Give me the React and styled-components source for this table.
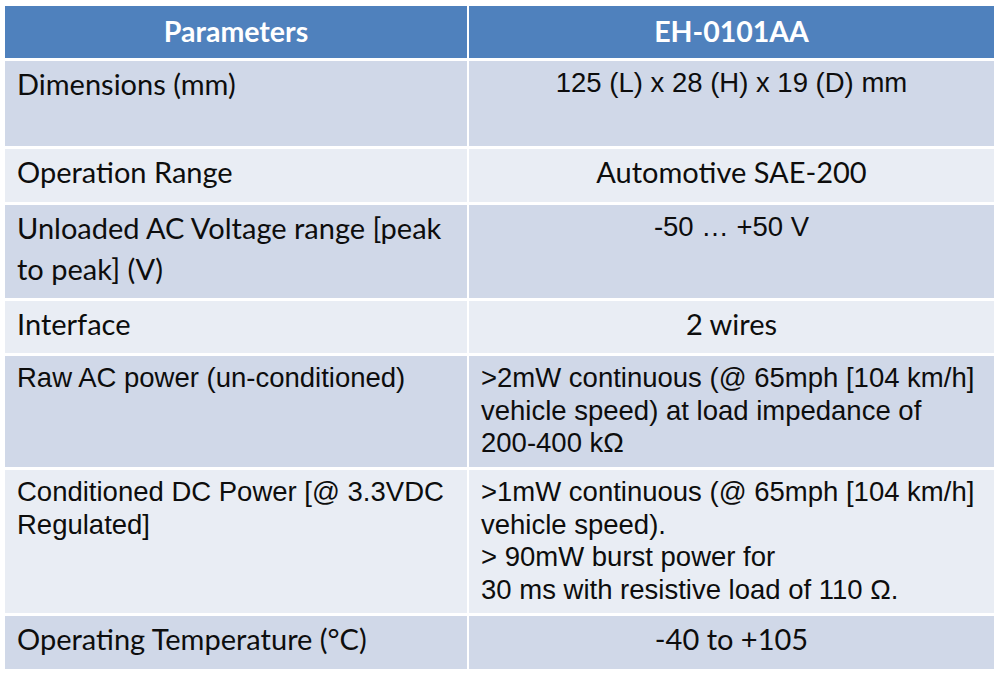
import React from "react";
import styled, { createGlobalStyle } from "styled-components";

const GlobalStyle = createGlobalStyle`
  body {
    margin: 0;
    background: #ffffff;
  }
`;

const CALIBRI = `Lato, "Open Sans", sans-serif`;
const ARIAL = `"Liberation Sans", Arial, sans-serif`;

const Page = styled.div`
  width: 1000px;
  height: 680px;
  padding: 6px 0 0 5px;
  box-sizing: border-box;
  background: #ffffff;
`;

const Table = styled.div`
  display: flex;
  flex-direction: column;
  gap: 3px;
  width: 989px;
`;

const Row = styled.div`
  display: grid;
  grid-template-columns: 462px 525px;
  column-gap: 2px;
  height: ${(p) => p.$height}px;
`;

const HeadCell = styled.div`
  background: #4f81bd;
  color: #ffffff;
  font-family: ${CALIBRI};
  font-weight: 700;
  font-size: 28.5px;
  display: flex;
  align-items: center;
  justify-content: center;
  padding-bottom: 3px;
`;

const Cell = styled.div`
  background: ${(p) => (p.$tone === "dark" ? "#d0d8e8" : "#e9edf4")};
  color: #0d0d0d;
  font-family: ${(p) => (p.$face === "arial" ? ARIAL : CALIBRI)};
  font-size: ${(p) => (p.$face === "arial" ? "27.5px" : "29px")};
  line-height: ${(p) => (p.$face === "arial" ? "32.5px" : "41px")};
  text-align: ${(p) => (p.$center ? "center" : "left")};
  padding: ${(p) => (p.$face === "arial" ? "6px 12px 0 12px" : "2px 12px 0 12px")};
  white-space: pre-line;
  box-sizing: border-box;
`;

const rows = [
  {
    height: 85,
    tone: "dark",
    label: "Dimensions (mm)",
    labelFace: "calibri",
    value: "125 (L) x 28 (H) x 19 (D) mm",
    valueFace: "arial",
    center: true,
  },
  {
    height: 53,
    tone: "light",
    label: "Operation Range",
    labelFace: "calibri",
    value: "Automotive SAE-200",
    valueFace: "calibri",
    center: true,
  },
  {
    height: 93,
    tone: "dark",
    label: "Unloaded AC Voltage range [peak\nto peak] (V)",
    labelFace: "calibri",
    value: "-50 … +50 V",
    valueFace: "arial",
    center: true,
  },
  {
    height: 52,
    tone: "light",
    label: "Interface",
    labelFace: "calibri",
    value: "2 wires",
    valueFace: "calibri",
    center: true,
  },
  {
    height: 111,
    tone: "dark",
    label: "Raw AC power (un-conditioned)",
    labelFace: "arial",
    value:
      ">2mW continuous (@ 65mph [104 km/h]\nvehicle speed) at load impedance of\n200-400 kΩ",
    valueFace: "arial",
    center: false,
  },
  {
    height: 143,
    tone: "light",
    label: "Conditioned DC Power [@ 3.3VDC\nRegulated]",
    labelFace: "arial",
    value:
      ">1mW continuous (@ 65mph [104 km/h]\nvehicle speed).\n> 90mW burst power for\n30 ms with resistive load of 110 Ω.",
    valueFace: "arial",
    center: false,
  },
  {
    height: 53,
    tone: "dark",
    label: "Operating Temperature (°C)",
    labelFace: "calibri",
    value: "-40 to +105",
    valueFace: "calibri",
    center: true,
  },
];

const App = () => {
  return (
    <Page>
      <GlobalStyle />
      <Table>
        <Row $height={52}>
          <HeadCell>Parameters</HeadCell>
          <HeadCell>EH-0101AA</HeadCell>
        </Row>
        {rows.map((row) => (
          <Row key={row.label} $height={row.height}>
            <Cell $tone={row.tone} $face={row.labelFace}>
              {row.label}
            </Cell>
            <Cell $tone={row.tone} $face={row.valueFace} $center={row.center}>
              {row.value}
            </Cell>
          </Row>
        ))}
      </Table>
    </Page>
  );
};

export default App;
